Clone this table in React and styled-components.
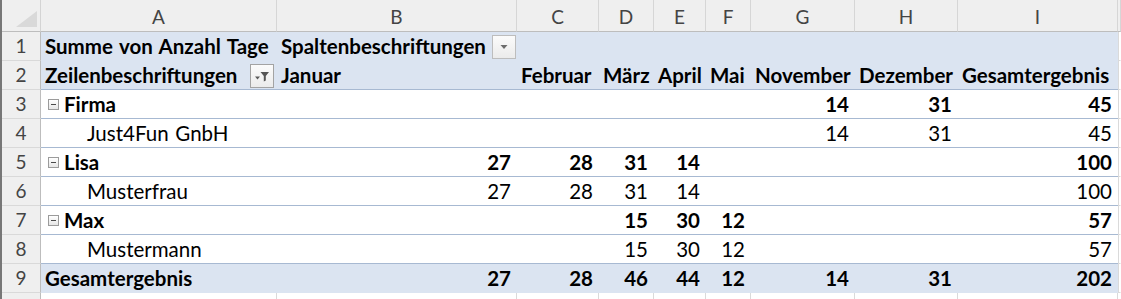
import React from "react";
import styled, { createGlobalStyle } from "styled-components";

const Global = createGlobalStyle`
  html, body { margin: 0; padding: 0; background: #ffffff; overflow: hidden; }
  #root { width: 1121px; height: 299px; overflow: hidden; }
`;

const FONT = `"Lato", "Noto Sans", sans-serif`;
const COLS = [39, 236, 240, 82, 55, 52, 45, 104, 103, 160];
const LETTERS = ["A", "B", "C", "D", "E", "F", "G", "H", "I"];

const Sheet = styled.div`
  display: grid;
  grid-template-columns: ${COLS.map((c) => `${c}px`).join(" ")} 1fr;
  grid-template-rows: 32px repeat(10, 29px);
  width: 1121px;
  box-sizing: border-box;
  border-left: 2px solid #777777;
  font-family: ${FONT};
  font-size: 20.5px;
  word-spacing: 1.5px;
  color: #000000;
`;

const Corner = styled.div`
  box-sizing: border-box;
  background: #efefef;
  border-right: 1px solid #d4d4d4;
  border-bottom: 1px solid #bdbdbd;
  display: flex;
  align-items: flex-end;
  justify-content: flex-end;
  padding: 0 3px 4px 0;
`;

const ColHead = styled.div`
  box-sizing: border-box;
  background: #efefef;
  border-right: 1px solid #d6d6d6;
  border-bottom: 1px solid #bdbdbd;
  display: flex;
  align-items: flex-end;
  justify-content: center;
  padding-bottom: 3px;
  color: #444444;
  font-size: 19px;
  line-height: 22px;
  overflow: hidden;
`;

const RowHead = styled.div`
  box-sizing: border-box;
  background: #efefef;
  border-right: 1px solid #bdbdbd;
  border-bottom: 1px solid #d9d9d9;
  display: flex;
  align-items: flex-end;
  justify-content: center;
  padding-bottom: 3px;
  color: #444444;
  font-size: 19px;
  line-height: 22px;
`;

const Cell = styled.div`
  box-sizing: border-box;
  background: ${(p) => (p.$band ? "#dbe4f1" : "#ffffff")};
  border-bottom: 1px solid ${(p) => (p.$line ? "#a7b9d2" : "transparent")};
  display: flex;
  align-items: flex-end;
  justify-content: ${(p) => (p.$right ? "flex-end" : "flex-start")};
  padding: 0 ${(p) => (p.$right ? 6 : 0)}px 3px ${(p) => p.$indent ?? 4}px;
  font-weight: ${(p) => (p.$bold ? 700 : 400)};
  line-height: 22px;
  white-space: nowrap;
  min-width: 0;
`;

const HeadCell = styled(Cell)`
  justify-content: space-between;
  padding-right: ${(p) => p.$gap}px;
`;

const GridCell = styled.div`
  box-sizing: border-box;
  background: #ffffff;
  border-right: 1px solid ${(p) => (p.$noRight ? "transparent" : "#dadada")};
  border-bottom: 1px solid #dadada;
  border-left: ${(p) => (p.$leftLine ? "1px solid #dadada" : "none")};
`;

const SmallButton = styled.div`
  box-sizing: border-box;
  width: 24px;
  height: 24px;
  align-self: flex-start;
  margin-top: ${(p) => p.$top}px;
  border: 1px solid ${(p) => p.$border};
  background: linear-gradient(#fbfbfb, #ebebeb);
  display: flex;
  align-items: center;
  justify-content: center;
  flex-shrink: 0;
`;

const Label = styled.span`
  display: inline-flex;
  align-items: flex-end;
`;

const CollapseBox = styled.span`
  box-sizing: border-box;
  width: 11px;
  height: 11px;
  margin: 0 5px 5px 0;
  border: 1px solid #9b9b9b;
  background: linear-gradient(#ffffff, #e6e6e6);
  display: inline-flex;
  align-items: center;
  justify-content: center;
  &::before {
    content: "";
    width: 5px;
    height: 1px;
    background: #4a4a4a;
  }
`;

const FunnelIcon = () => (
  <svg width="18" height="16" viewBox="0 0 18 16">
    <path d="M2 8.5 L7 8.5 L4.5 11.5 Z" fill="#5a5a5a" />
    <path d="M7.5 4 L16 4 L12.8 8 L12.8 12.5 L10.8 13.5 L10.8 8 Z" fill="#555555" />
  </svg>
);

const ArrowIcon = () => (
  <svg width="10" height="6" viewBox="0 0 10 6">
    <path d="M1.5 1 L8.5 1 L5 5 Z" fill="#6c6c6c" />
  </svg>
);

const CornerTriangle = () => (
  <svg width="21" height="16" viewBox="0 0 21 16">
    <path d="M21 0 L21 16 L0 16 Z" fill="#d9d9d9" />
  </svg>
);

const months = ["Januar", "Februar", "März", "April", "Mai", "November", "Dezember", "Gesamtergebnis"];
const body = [
  { label: "Firma", level: 0, vals: ["", "", "", "", "", 14, 31, 45] },
  { label: "Just4Fun GnbH", level: 1, vals: ["", "", "", "", "", 14, 31, 45] },
  { label: "Lisa", level: 0, vals: [27, 28, 31, 14, "", "", "", 100] },
  { label: "Musterfrau", level: 1, vals: [27, 28, 31, 14, "", "", "", 100] },
  { label: "Max", level: 0, vals: ["", "", 15, 30, 12, "", "", 57] },
  { label: "Mustermann", level: 1, vals: ["", "", 15, 30, 12, "", "", 57] },
];
const total = [27, 28, 46, 44, 12, 14, 31, 202];

export default function App() {
  return (
    <>
      <Global />
      <Sheet>
        <Corner>
          <CornerTriangle />
        </Corner>
        {LETTERS.map((l) => (
          <ColHead key={l}>{l}</ColHead>
        ))}
        <ColHead />

        {/* Row 1 */}
        <RowHead>1</RowHead>
        <Cell $band $bold>Summe von Anzahl Tage</Cell>
        <HeadCell $band $bold $gap={1}>
          <Label>Spaltenbeschriftungen</Label>
          <SmallButton $top={3} $border="#bdbdbd">
            <ArrowIcon />
          </SmallButton>
        </HeadCell>
        {months.slice(1).map((m) => (
          <Cell key={m} $band />
        ))}
        <GridCell $leftLine $noRight />

        {/* Row 2 */}
        <RowHead>2</RowHead>
        <HeadCell $band $bold $line $gap={3}>
          <Label>Zeilenbeschriftungen</Label>
          <SmallButton $top={3} $border="#a3a3a3">
            <FunnelIcon />
          </SmallButton>
        </HeadCell>
        {months.map((m) => (
          <Cell key={m} $band $bold $line>
            {m}
          </Cell>
        ))}
        <GridCell $leftLine $noRight />

        {body.map((r, i) => (
          <React.Fragment key={r.label}>
            <RowHead>{i + 3}</RowHead>
            {r.level === 0 ? (
              <Cell $bold $line $indent={7}>
                <CollapseBox />
                {r.label}
              </Cell>
            ) : (
              <Cell $line $indent={46}>
                {r.label}
              </Cell>
            )}
            {r.vals.map((v, j) => (
              <Cell key={j} $right $line $bold={r.level === 0}>
                {v}
              </Cell>
            ))}
            <GridCell $leftLine $noRight />
          </React.Fragment>
        ))}

        {/* Row 9 */}
        <RowHead>9</RowHead>
        <Cell $band $bold>Gesamtergebnis</Cell>
        {total.map((v, j) => (
          <Cell key={j} $band $bold $right>
            {v}
          </Cell>
        ))}
        <GridCell $leftLine $noRight />

        {/* Row 10 (only its top edge is in view) */}
        <RowHead />
        {LETTERS.map((l) => (
          <GridCell key={l} />
        ))}
        <GridCell $noRight />
      </Sheet>
    </>
  );
}
